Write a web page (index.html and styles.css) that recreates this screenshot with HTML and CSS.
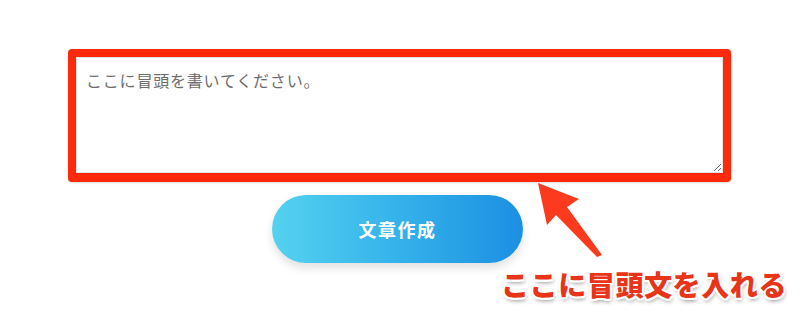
FILE: index.html
```html
<!DOCTYPE html>
<html lang="ja">
<head>
<meta charset="utf-8">
<link rel="stylesheet" href="styles.css">
</head>
<body>
<div class="page">
  <div class="stage">
    <div class="frame">
      <textarea class="lead">ここに冒頭を書いてください。</textarea>
    </div>
    <button class="make">文章作成</button>
  </div>
  <svg class="arrow" width="90" height="90" viewBox="0 0 90 90">
    <polygon points="8,8 49,24 37,32 72,80 67,82 26,40 17,50" fill="#fb3a1e"/>
  </svg>
  <div class="label">ここに冒頭文を入れる</div>
</div>
</body>
</html>
```
FILE: styles.css
```css
html, body {
  margin: 0;
  padding: 0;
  background: #ffffff;
}
.page {
  position: relative;
  width: 800px;
  height: 312px;
  overflow: hidden;
  font-family: "Noto Sans CJK JP", "Noto Sans", sans-serif;
}
.stage {
  display: flex;
  flex-direction: column;
  align-items: center;
  padding-top: 49px;
  gap: 13px;
}
.frame {
  box-sizing: border-box;
  width: 663px;
  height: 133px;
  margin-left: -1px;
  border: 8px solid #ff2a0c;
  border-bottom-width: 9px;
  border-radius: 4px;
  background: #fff;
  box-shadow: 0 1px 2px rgba(0,0,0,0.15);
  display: flex;
}
.lead {
  flex: 1;
  box-sizing: border-box;
  margin: 0;
  border: 1px solid #e4e4e4;
  padding: 11px 9px;
  font-family: "Noto Sans CJK JP", sans-serif;
  font-size: 16px;
  line-height: 22px;
  letter-spacing: 0.8px;
  color: #6d6d6d;
  background: #fff;
  resize: both;
  outline: none;
}
.make {
  box-sizing: border-box;
  width: 251px;
  height: 68px;
  margin-left: -5px;
  border: none;
  border-radius: 34px;
  background: linear-gradient(90deg, #55d2ef 0%, #35b2ea 50%, #1c8fe2 100%);
  color: #ffffff;
  font-family: "Noto Sans CJK JP", sans-serif;
  font-weight: 700;
  font-size: 18px;
  letter-spacing: 1.5px;
  box-shadow: 0 5px 10px rgba(0,0,0,0.12);
}
.arrow {
  position: absolute;
  left: 530px;
  top: 175px;
}
.label {
  position: absolute;
  left: 501px;
  top: 264px;
  font-family: "Noto Sans CJK JP", sans-serif;
  font-weight: 900;
  font-size: 28px;
  line-height: 40px;
  letter-spacing: 0.6px;
  color: #e83418;
  white-space: nowrap;
  text-shadow:
    2px 0 0 #fff, -2px 0 0 #fff, 0 2px 0 #fff, 0 -2px 0 #fff,
    1.5px 1.5px 0 #fff, -1.5px 1.5px 0 #fff, 1.5px -1.5px 0 #fff, -1.5px -1.5px 0 #fff,
    1px 3px 4px rgba(0,0,0,0.45);
}
```
